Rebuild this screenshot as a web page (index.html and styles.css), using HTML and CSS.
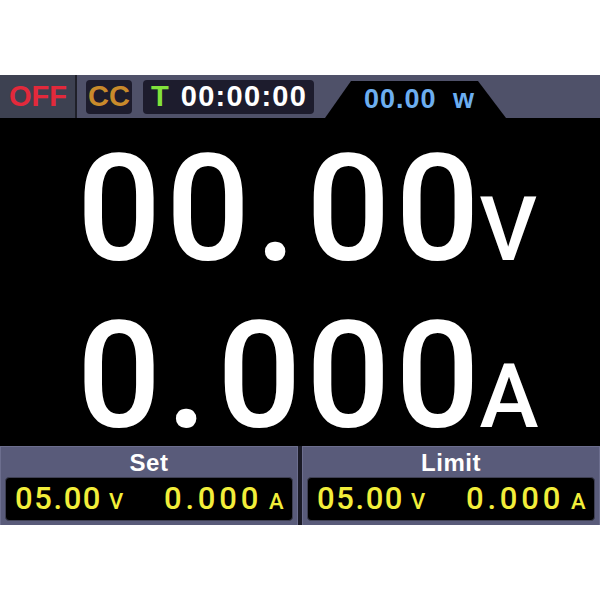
FILE: index.html
```html
<!DOCTYPE html>
<html>
<head>
<meta charset="utf-8">
<link rel="stylesheet" href="styles.css">
</head>
<body>
<div class="screen">
  <div class="status">
    <div class="off">OFF</div>
    <div class="box cc">CC</div>
    <div class="box timer"><span class="t">T</span><span class="time">00:00:00</span></div>
    <div class="tab"><span class="power">00.00 w</span></div>
  </div>
  <div class="main">
    <div class="reading">00<span class="dot">.</span>00<span class="unit">V</span></div>
    <div class="reading">0<span class="dot">.</span>000<span class="unit">A</span></div>
  </div>
  <div class="panels">
    <div class="panel">
      <div class="title">Set</div>
      <div class="values">
        <div class="val">05.00<span class="u">V</span></div>
        <div class="val cur">0.000<span class="u">A</span></div>
      </div>
    </div>
    <div class="panel">
      <div class="title">Limit</div>
      <div class="values">
        <div class="val">05.00<span class="u">V</span></div>
        <div class="val cur">0.000<span class="u">A</span></div>
      </div>
    </div>
  </div>
</div>
</body>
</html>
```
FILE: styles.css
```css
html, body {
  margin: 0;
  padding: 0;
  background: #ffffff;
}
.screen {
  margin-top: 75px;
  width: 600px;
  height: 450px;
  display: flex;
  flex-direction: column;
  background: #000;
}
.status {
  height: 43px;
  display: flex;
  align-items: center;
  background: #4f5169;
  font-family: "Liberation Sans", Arial, sans-serif;
  font-weight: 700;
  font-size: 29px;
}
.off {
  width: 77px;
  height: 43px;
  box-sizing: border-box;
  background: #3d4151;
  border-right: 2px solid #1f2029;
  color: #e3293b;
  display: flex;
  align-items: center;
  justify-content: center;
  padding-left: 1px;
}
.box {
  height: 34px;
  background: #1d1c2d;
  border-radius: 4px;
  display: flex;
  align-items: center;
  box-sizing: border-box;
}
.cc {
  margin-left: 9px;
  width: 46px;
  justify-content: center;
  color: #c98a2b;
}
.timer {
  margin-left: 11px;
  width: 171px;
  padding-left: 8px;
  color: #fff;
}
.t {
  color: #82e23c;
  margin-right: 12px;
}
.time {
  letter-spacing: 1.3px;
}
.tab {
  align-self: flex-end;
  margin-left: 11px;
  width: 181px;
  height: 37px;
  background: #000;
  clip-path: polygon(26px 0, 153px 0, 181px 100%, 0 100%);
  display: flex;
  justify-content: center;
  align-items: center;
  color: #6caef0;
  font-size: 27px;
}
.power {
  padding-left: 8px;
  letter-spacing: 1px;
  word-spacing: 8px;
}
.main {
  height: 328px;
  box-sizing: border-box;
  padding: 18px 0 0 77px;
  font-family: Roboto, "Liberation Sans", sans-serif;
  font-weight: 500;
  color: #fff;
}
.reading {
  font-size: 148px;
  line-height: 147px;
  letter-spacing: 5px;
  white-space: nowrap;
}
.dot {
  letter-spacing: 10px;
}
.unit {
  font-size: 89px;
  letter-spacing: 0;
  margin-left: -5px;
}
.panels {
  height: 79px;
  display: grid;
  grid-template-columns: 298px 298px;
  column-gap: 4px;
  background: #1a1a26;
}
.panel {
  background: #595b7a;
  border: 1px solid #6c6e8e;
  border-bottom: none;
  box-sizing: border-box;
  display: flex;
  flex-direction: column;
  padding: 0 4px 4px 4px;
}
.title {
  height: 30px;
  box-sizing: border-box;
  padding-top: 3px;
  text-align: center;
  color: #fff;
  font-family: "Liberation Sans", Arial, sans-serif;
  font-weight: 700;
  font-size: 24px;
  line-height: 26px;
  letter-spacing: 0.5px;
}
.values {
  flex: 1;
  background: #000;
  border: 1px solid #3e3f52;
  border-radius: 4px;
  display: grid;
  grid-template-columns: 149px auto;
  align-items: center;
  padding-left: 9px;
  color: #f2ee3a;
  font-family: Roboto, "Liberation Sans", sans-serif;
  font-weight: 500;
  font-size: 31px;
  letter-spacing: 1.6px;
}
.val {
  white-space: nowrap;
  line-height: 36px;
  padding-top: 2px;
}
.cur {
  letter-spacing: 3.8px;
}
.u {
  font-size: 22px;
  margin-left: 7px;
  letter-spacing: 0;
}
```
